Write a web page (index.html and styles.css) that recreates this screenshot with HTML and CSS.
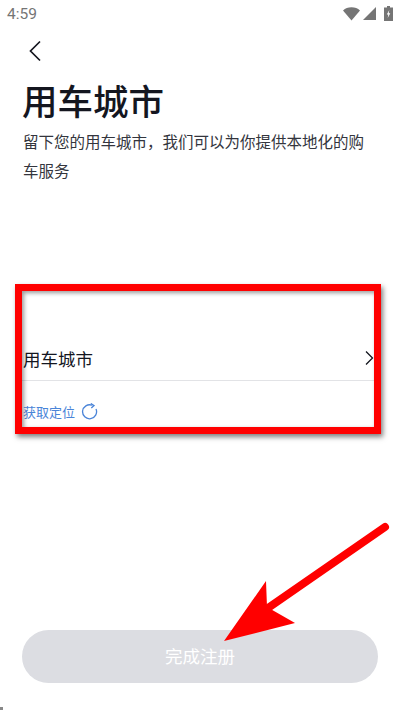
FILE: index.html
```html
<!DOCTYPE html>
<html lang="zh">
<head>
<meta charset="utf-8">
<title>用车城市</title>
<link rel="stylesheet" href="styles.css">
</head>
<body>
<div class="status">
  <span class="time">4:59</span>
  <div class="status-icons">
    <svg width="17" height="14" viewBox="0 0 17 14"><path d="M0 3.500C2.200 1.400 5.200 0.300 8.500 0.300S14.800 1.400 17 3.500L8.500 13.500Z" fill="#757575"/></svg>
    <svg width="13" height="13" viewBox="0 0 13 13"><path d="M13 0V13H0Z" fill="#757575"/></svg>
    <svg class="battery" width="9" height="15" viewBox="0 0 9 15"><path d="M3 0H6V1.500H9V15H0V1.500H3Z" fill="#757575"/><path d="M5.300 4L2.800 8.500H4.300L3.700 12L6.300 7.300H4.700Z" fill="#fff"/></svg>
  </div>
</div>

<div class="back">
  <svg width="14" height="22" viewBox="0 0 14 22"><path d="M12 1.500L2.500 11L12 20.500" fill="none" stroke="#14161f" stroke-width="1.700"/></svg>
</div>

<h1>用车城市</h1>
<p class="desc">留下您的用车城市，我们可以为你提供本地化的购车服务</p>

<div class="city-row">
  <span>用车城市</span>
  <svg width="10" height="16" viewBox="0 0 10 16"><path d="M2 1.500L8.500 8L2 14.500" fill="none" stroke="#14161f" stroke-width="1.300"/></svg>
</div>
<div class="locate">
  <span>获取定位</span>
  <svg width="17" height="17" viewBox="0 0 17 17"><path d="M11 2.200A7 7 0 1 0 15 6" fill="none" stroke="#4a84d8" stroke-width="1.300"/><path d="M9.800 0.500L13 2.600L10.300 5" fill="none" stroke="#4a84d8" stroke-width="1.300"/></svg>
</div>

<button class="submit">完成注册</button>

<!-- red marks drawn over the screenshot -->
<div class="mark-box"></div>
<svg class="mark-arrow" width="400" height="710" viewBox="0 0 400 710">
  <path d="M385 527L268 608" fill="none" stroke="#f00" stroke-width="8" stroke-linecap="round"/>
  <path d="M224 641L266 581L267 607L295 623Z" fill="#f00"/>
</svg>
<div class="corner-speck"></div>
</body>
</html>
```

FILE: styles.css
```css
html, body { margin: 0; padding: 0; }
body {
  width: 400px;
  height: 710px;
  overflow: hidden;
  background: #fff;
  color: #14161f;
  font-family: "Noto Sans CJK SC", "Liberation Sans", sans-serif;
}

.status { display: flex; justify-content: space-between; align-items: center; height: 27px; padding: 0 7px; }
.time { font-family: Roboto, sans-serif; font-size: 15.500px; color: #757575; }
.status-icons { display: flex; align-items: center; gap: 3px; }
.battery { margin-left: 5px; }

.back { height: 22px; margin: 13px 0 0 28px; }
.back svg { display: block; }

h1 { margin: 13px 0 0 22px; font-size: 35.500px; line-height: 50px; font-weight: 500; }
.desc { margin: 2px 23px 0; font-size: 15.500px; line-height: 29px; color: #33353d; }

.city-row {
  display: flex;
  justify-content: space-between;
  align-items: center;
  box-sizing: border-box;
  margin: 155px 22px 0;
  height: 41px;
  padding: 0 4px 4px 1px;
  border-bottom: 1px solid #e2e3e6;
  font-size: 17.500px;
}
.locate { display: flex; align-items: center; gap: 6px; margin: 20px 23px 0; height: 20px; font-size: 13px; color: #4a84d8; }

.submit {
  display: block;
  width: 356px;
  height: 53px;
  margin: 209px 22px 0;
  padding: 0 0 2px;
  border: 0;
  border-radius: 27px;
  background: #dcdde2;
  color: #fff;
  font-family: inherit;
  font-size: 17.500px;
}

.mark-box {
  position: absolute;
  left: 15px;
  top: 284px;
  width: 352px;
  height: 136px;
  border: 7px solid #f00;
  box-shadow: 2px 3px 5px rgba(0,0,0,.5), inset 2px 2px 4px rgba(0,0,0,.4);
}
.mark-arrow { position: absolute; left: 0; top: 0; }
.corner-speck { position: absolute; left: 0; top: 707px; width: 3px; height: 3px; background: #888; }
```
